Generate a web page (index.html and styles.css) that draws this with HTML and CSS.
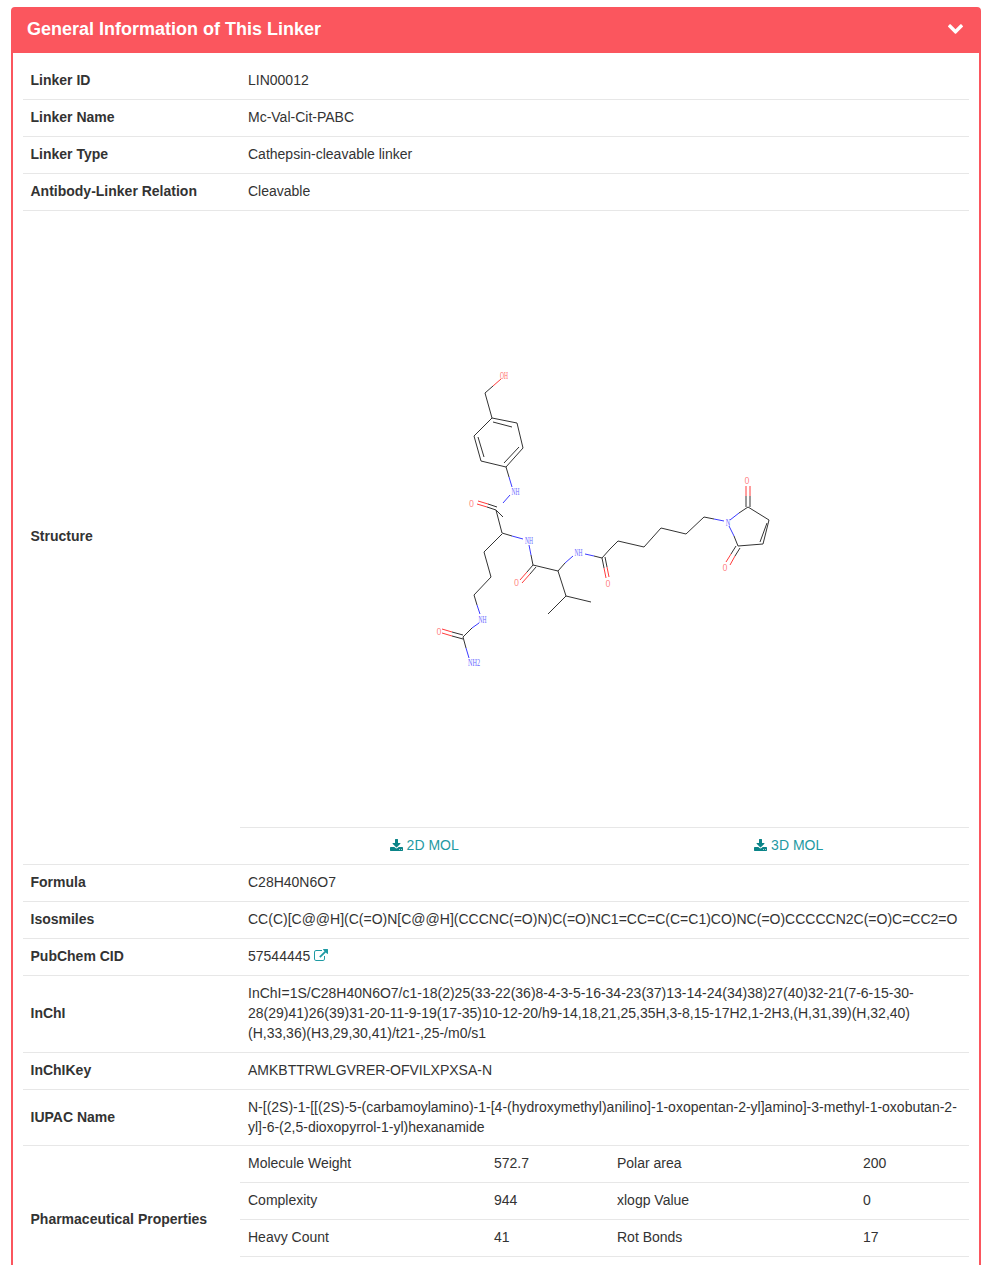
FILE: index.html
```html
<!DOCTYPE html>
<html>
<head>
    <title>General Information of This Linker</title>
    <link rel="stylesheet" href="styles.css">
</head>
<body>
    <div class="panel">
        <div class="panel-heading">
            <h3>General Information of This Linker</h3>
            <svg class="chevron" viewBox="96 530 1600 1040"><path d="M1683 808l-742 741q-19 19-45 19t-45-19l-742-741q-19-19-19-45.5t19-45.5l166-165q19-19 45-19t45 19l531 531 531-531q19-19 45-19t45 19l166 165q19 19 19 45.5t-19 45.5z"/></svg>
        </div>
        <div class="panel-body">
            <table class="info">
                <tr><th>Linker ID</th><td>LIN00012</td></tr>
                <tr><th>Linker Name</th><td>Mc-Val-Cit-PABC</td></tr>
                <tr><th>Linker Type</th><td>Cathepsin-cleavable linker</td></tr>
                <tr><th>Antibody-Linker Relation</th><td>Cleavable</td></tr>
                <tr class="structure">
                    <th>Structure</th>
                    <td class="nested">
                        <svg class="molecule" viewBox="240 211 729 616">
                            <path class="bond" d="M493 386L485 393L492 418L517 423L523 448L506 467L481 461L474 436L492 418M493 422L512 427M519 447L504 463M478 437L484 457M506 467L509 477M503 517L496 510L502 533L512 536M496 510L487 507M497 507L488 504M531 555L533 565L558 571L565 563M533 565L527 572M536 567L530 574M594 556L602 558L610 549M602 558L604 568M605 557L607 567M610 549L618 541L644 547L661 528L686 534L704 517L714 519M739 513L748 507L769 520L763 544L738 546L734 536M767 523L760 542M746 507L746 496M750 507L750 496M736 546L731 554M740 548L735 556M558 571L566 596L548 614M566 596L591 602M502 534L484 552L491 577L474 595L477 605M472 628L463 637L466 648M463 635L452 632M463 639L452 636"/>
                            <path class="bond-n" d="M509 477L512 487M510 495L503 503M512 536L523 539M529 545L531 555M565 563L573 556M585 554L594 556M714 519L724 521M730 520L739 513M729 526L734 536M477 605L480 614M479 623L472 628M466 648L469 658"/>
                            <path class="bond-o" d="M493 386L501 379M487 507L477 504M488 504L478 501M527 572L520 580M530 574L522 583M604 568L606 578M607 567L609 577M746 496L746 486M750 496L750 486M731 554L726 562M735 556L730 565M452 632L442 629M452 636L442 633"/>
                            <text class="atom-o" x="504" y="378.5" textLength="8" lengthAdjust="spacingAndGlyphs">OH</text>
                            <text class="atom-n" x="515.5" y="495" textLength="8" lengthAdjust="spacingAndGlyphs">NH</text>
                            <text class="atom-o" x="471.5" y="507" textLength="4.5" lengthAdjust="spacingAndGlyphs">O</text>
                            <text class="atom-n" x="529" y="543.5" textLength="8" lengthAdjust="spacingAndGlyphs">NH</text>
                            <text class="atom-o" x="516.5" y="586" textLength="4.5" lengthAdjust="spacingAndGlyphs">O</text>
                            <text class="atom-n" x="578.5" y="556" textLength="8" lengthAdjust="spacingAndGlyphs">NH</text>
                            <text class="atom-o" x="608" y="586.5" textLength="4.5" lengthAdjust="spacingAndGlyphs">O</text>
                            <text class="atom-n" x="482.5" y="622.5" textLength="8" lengthAdjust="spacingAndGlyphs">NH</text>
                            <text class="atom-o" x="439" y="635" textLength="4.5" lengthAdjust="spacingAndGlyphs">O</text>
                            <text class="atom-n" x="474" y="666" textLength="12" lengthAdjust="spacingAndGlyphs">NH2</text>
                            <text class="atom-n" x="728" y="525.5" textLength="4.5" lengthAdjust="spacingAndGlyphs">N</text>
                            <text class="atom-o" x="747" y="484" textLength="4.5" lengthAdjust="spacingAndGlyphs">O</text>
                            <text class="atom-o" x="725" y="570.5" textLength="4.5" lengthAdjust="spacingAndGlyphs">O</text>
                        </svg>
                        <div class="downloads">
                            <a href="#"><svg class="icon" viewBox="0 0 1664 1536"><path d="M1280 1344q0-26-19-45t-45-19-45 19-19 45 19 45 45 19 45-19 19-45zm256 0q0-26-19-45t-45-19-45 19-19 45 19 45 45 19 45-19 19-45zm128-224v320q0 40-28 68t-68 28h-1472q-40 0-68-28t-28-68v-320q0-40 28-68t68-28h465l135 136q58 56 136 56t136-56l136-136h464q40 0 68 28t28 68zm-325-569q17 41-14 70l-448 448q-18 19-45 19t-45-19l-448-448q-31-29-14-70 17-39 59-39h256v-448q0-26 19-45t45-19h256q26 0 45 19t19 45v448h256q42 0 59 39z"/></svg> 2D MOL</a>
                            <a href="#"><svg class="icon" viewBox="0 0 1664 1536"><path d="M1280 1344q0-26-19-45t-45-19-45 19-19 45 19 45 45 19 45-19 19-45zm256 0q0-26-19-45t-45-19-45 19-19 45 19 45 45 19 45-19 19-45zm128-224v320q0 40-28 68t-68 28h-1472q-40 0-68-28t-28-68v-320q0-40 28-68t68-28h465l135 136q58 56 136 56t136-56l136-136h464q40 0 68 28t28 68zm-325-569q17 41-14 70l-448 448q-18 19-45 19t-45-19l-448-448q-31-29-14-70 17-39 59-39h256v-448q0-26 19-45t45-19h256q26 0 45 19t19 45v448h256q42 0 59 39z"/></svg> 3D MOL</a>
                        </div>
                    </td>
                </tr>
                <tr><th>Formula</th><td>C28H40N6O7</td></tr>
                <tr><th>Isosmiles</th><td>CC(C)[C@@H](C(=O)N[C@@H](CCCNC(=O)N)C(=O)NC1=CC=C(C=C1)CO)NC(=O)CCCCCN2C(=O)C=CC2=O</td></tr>
                <tr>
                    <th>PubChem CID</th>
                    <td>57544445 <a href="#"><svg class="icon-ext" viewBox="0 0 1792 1536"><path d="M1408 928v320q0 119-84.5 203.5t-203.5 84.5h-832q-119 0-203.5-84.5t-84.5-203.5v-832q0-119 84.5-203.5t203.5-84.5h704q14 0 23 9t9 23v64q0 14-9 23t-23 9h-704q-66 0-113 47t-47 113v832q0 66 47 113t113 47h832q66 0 113-47t47-113v-320q0-14 9-23t23-9h64q14 0 23 9t9 23zm384-864v512q0 26-19 45t-45 19-45-19l-176-176-652 652q-10 10-23 10t-23-10l-114-114q-10-10-10-23t10-23l652-652-176-176q-19-19-19-45t19-45 45-19h512q26 0 45 19t19 45z"/></svg></a></td>
                </tr>
                <tr><th>InChI</th><td>InChI=1S/C28H40N6O7/c1-18(2)25(33-22(36)8-4-3-5-16-34-23(37)13-14-24(34)38)27(40)32-21(7-6-15-30-28(29)41)26(39)31-20-11-9-19(17-35)10-12-20/h9-14,18,21,25,35H,3-8,15-17H2,1-2H3,(H,31,39)(H,32,40)(H,33,36)(H3,29,30,41)/t21-,25-/m0/s1</td></tr>
                <tr><th>InChIKey</th><td>AMKBTTRWLGVRER-OFVILXPXSA-N</td></tr>
                <tr class="tight"><th>IUPAC Name</th><td>N-[(2S)-1-[[(2S)-5-(carbamoylamino)-1-[4-(hydroxymethyl)anilino]-1-oxopentan-2-yl]amino]-3-methyl-1-oxobutan-2-yl]-6-(2,5-dioxopyrrol-1-yl)hexanamide</td></tr>
                <tr>
                    <th>Pharmaceutical Properties</th>
                    <td class="nested">
                        <table class="props">
                            <tr><td>Molecule Weight</td><td>572.7</td><td>Polar area</td><td>200</td></tr>
                            <tr><td>Complexity</td><td>944</td><td>xlogp Value</td><td>0</td></tr>
                            <tr><td>Heavy Count</td><td>41</td><td>Rot Bonds</td><td>17</td></tr>
                            <tr><td>&nbsp;</td><td></td><td></td><td></td></tr>
                        </table>
                    </td>
                </tr>
            </table>
        </div>
    </div>
</body>
</html>
```

FILE: styles.css
```css
html, body {
    height: 1265px;
    overflow: hidden;
}
body {
    margin: 0;
    padding: 7px 18px 0 11px;
    box-sizing: border-box;
    font-family: "Liberation Sans", Arial, sans-serif;
    font-size: 14px;
    line-height: 20px;
    color: #333;
}
.panel {
    border: 2px solid #fb565e;
    border-radius: 4px;
    background-color: #fff;
}
.panel-heading {
    display: flex;
    justify-content: space-between;
    align-items: center;
    height: 44px;
    box-sizing: border-box;
    padding: 0 16px 5px 14px;
    background-color: #fb565e;
    color: #fff;
}
.panel-heading h3 {
    margin: 0;
    font-size: 18px;
    font-weight: bold;
}
.chevron {
    width: 15px;
    height: 10px;
    fill: #fff;
}
.panel-body {
    padding: 10px 10px 30px;
}
.info, .props {
    width: 100%;
    border-collapse: collapse;
    table-layout: fixed;
}
.info th, .info td {
    padding: 7px 8px 9px;
    border-bottom: 1px solid #e7e7e7;
    text-align: left;
    vertical-align: middle;
}
.info th {
    width: 201px;
    padding-left: 7.5px;
    padding-right: 8.5px;
    font-weight: bold;
}
.info .tight th, .info .tight td {
    padding-bottom: 8px;
}
.info .structure th {
    padding-bottom: 11px;
}
.info td.nested {
    padding: 0;
}
.props td:nth-child(1), .props td:nth-child(3) {
    width: 230px;
}
.props td:nth-child(2) {
    width: 107px;
}
.molecule {
    display: block;
    width: 729px;
    height: 616px;
    border-bottom: 1px solid #e7e7e7;
}
.bond, .bond-n, .bond-o {
    fill: none;
    stroke-width: 1;
}
.bond {
    stroke: #333;
}
.bond-n {
    stroke: #3b3bff;
}
.bond-o {
    stroke: #ff3b3b;
}
.atom-n, .atom-o {
    font-family: "Liberation Serif", serif;
    font-size: 10px;
    text-anchor: middle;
}
.atom-n {
    fill: #6a6aff;
}
.atom-o {
    fill: #ff6a6a;
}
.downloads {
    display: flex;
    padding: 7px 0 9px;
}
.downloads a {
    flex: 1;
    padding-left: 4px;
    text-align: center;
}
a {
    color: #1f9aa3;
    text-decoration: none;
}
.icon {
    width: 13px;
    height: 12px;
    fill: #0a8488;
    vertical-align: -1px;
}
.icon-ext {
    width: 14px;
    height: 12px;
    fill: #1f9aa3;
    vertical-align: 0;
}
```
